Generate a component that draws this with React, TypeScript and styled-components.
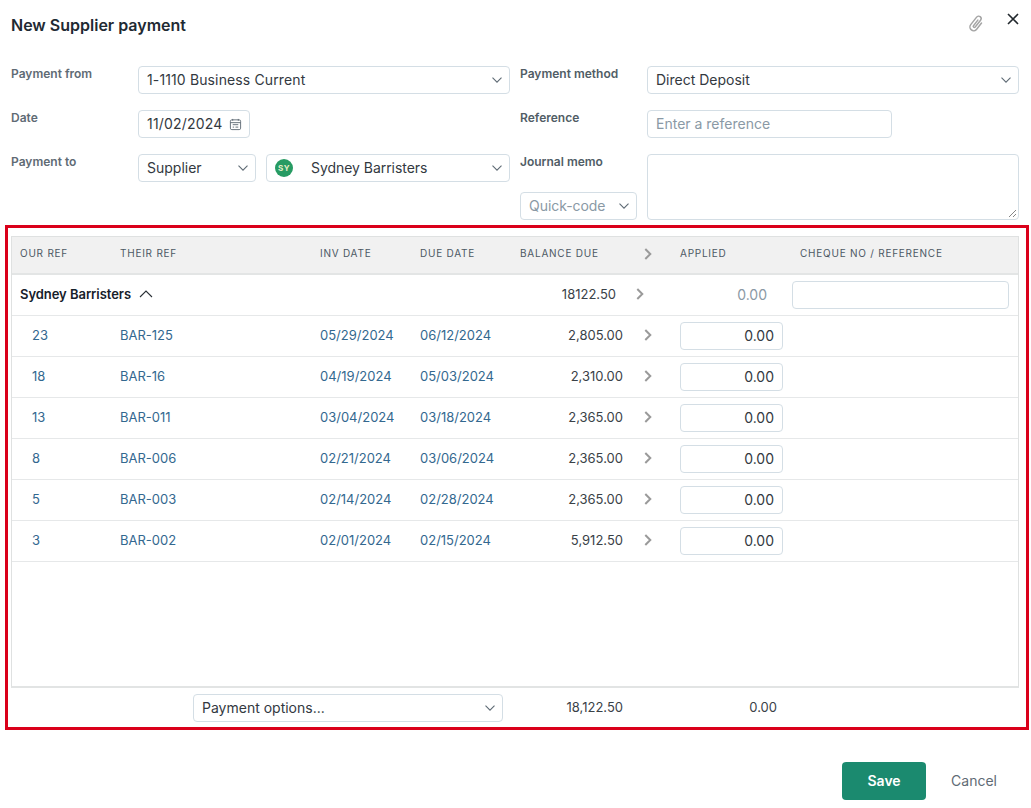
import React from "react";
import styled, { createGlobalStyle } from "styled-components";

const Global = createGlobalStyle`
  html, body { margin: 0; padding: 0; background: #fff; }
  body { font-family: Inter, "Liberation Sans", sans-serif; color: #2b3238; }
  * { box-sizing: border-box; }
`;

const Page = styled.div`
  width: 1031px;
  height: 808px;
  overflow: hidden;
  display: flex;
  flex-direction: column;
`;
const Header = styled.header`
  height: 66px;
  padding: 16px 12px 0 11px;
  display: flex;
  justify-content: space-between;
  align-items: flex-start;
`;
const Title = styled.h1`
  margin: 0;
  font-size: 16px;
  line-height: 18px;
  font-weight: 600;
  color: #1f2a33;
`;
const HeaderIcons = styled.div`
  display: flex;
  gap: 21px;
  margin-top: -3px;
  align-items: flex-start;
`;
const IconBtn = styled.span<{ $top?: number; $size: number }>`
  display: block;
  width: ${(p) => p.$size}px;
  height: ${(p) => p.$size}px;
  margin-top: ${(p) => p.$top ?? 0}px;
  svg { display: block; }
`;
const Form = styled.div`
  display: grid;
  grid-template-columns: 127px 372px 137px 372px;
  padding-left: 11px;
  grid-template-rows: 28px 28px 66px;
  row-gap: 16px;
`;
const LabelCell = styled.div<{ $second?: boolean }>`
  font-size: 12px;
  line-height: 16px;
  font-weight: 600;
  color: ${(p) => (p.$second ? "#515d66" : "#5f6b75")};
  margin-left: ${(p) => (p.$second ? 10 : 0)}px;
`;
const MemoLabelCell = styled(LabelCell)`
  display: flex;
  flex-direction: column;
  justify-content: space-between;
`;
const FieldBox = styled.div<{ $w?: number; $muted?: boolean }>`
  position: relative;
  height: 28px;
  width: ${(p) => (p.$w ? `${p.$w}px` : "100%")};
  border: 1px solid #d4dee5;
  border-radius: 4px;
  background: #fff;
  display: flex;
  align-items: center;
  padding: 0 7px 1px 8px;
  font-size: 14px;
  font-weight: 400;
  color: ${(p) => (p.$muted ? "#8a99a5" : "#33393f")};
  flex-shrink: 0;
  white-space: nowrap;
`;
const FieldText = styled.span<{ $track?: number }>`
  flex: 1;
  letter-spacing: ${(p) => p.$track ?? 0}px;
`;
const FieldInline = styled.div`
  display: flex;
  gap: 10px;
`;
const Avatar = styled.span`
  width: 18px;
  height: 18px;
  border-radius: 50%;
  background: #279b63;
  color: #e8efc9;
  font-size: 8px;
  font-weight: 700;
  letter-spacing: 0.5px;
  display: flex;
  align-items: center;
  justify-content: center;
  margin: 1px 18px 0 0;
`;
const IconSlot = styled.span`
  display: flex;
  margin: 1px 0 0;
`;
const Memo = styled.div`
  position: relative;
  height: 66px;
  border: 1px solid #d4dee5;
  border-radius: 4px;
`;
const ResizeGrip = styled.svg`
  position: absolute;
  right: 1px;
  bottom: 1px;
`;
const Highlight = styled.section`
  margin: 5px 2px 0 5px;
  height: 505px;
  border: 3px solid #da001a;
  padding: 8px 7px 0 3px;
  display: flex;
  flex-direction: column;
`;
const TableFrame = styled.div`
  height: 452px;
  flex: none;
  border: 1px solid #dfe1e1;
  border-bottom: 2px solid #e2e4e4;
`;
const Row = styled.div`
  display: grid;
  grid-template-columns: 100px 200px 100px 100px 120px 40px 120px 1fr;
  align-items: center;
`;
const HeadRow = styled(Row)`
  height: 38px;
  background: #f1f1f1;
  border-bottom: 2px solid #e3e5e5;
`;
const HeadCell = styled.div`
  font-size: 10px;
  line-height: 12px;
  letter-spacing: 0.76px;
  padding: 0 0 5px 8px;
  color: #4c5863;
  font-weight: 400;
  white-space: nowrap;
`;
const GroupRow = styled(Row)`
  height: 41px;
  border-bottom: 1px solid #e6e8e9;
`;
const DataRow = styled(Row)`
  height: 41px;
  border-bottom: 1px solid #e6e8e9;
`;
const GroupName = styled.div`
  grid-column: 1 / span 4;
  padding: 0 0 2px 8px;
  font-size: 13px;
  font-weight: 600;
  color: #16202a;
  display: flex;
  align-items: center;
  gap: 8px;
  letter-spacing: -0.05px;
`;
const Num = styled.div<{ $pad?: number; $muted?: boolean }>`
  text-align: right;
  font-size: 13px;
  padding: 0 ${(p) => p.$pad ?? 9}px 2px 0;
  color: ${(p) => (p.$muted ? "#8a99a5" : "#3a4147")};
`;
const GroupApplied = styled(Num)`
  font-size: 14px;
  padding-right: 25px;
`;
const LinkCell = styled.a<{ $indent?: number }>`
  font-size: 13px;
  color: #33688f;
  padding: 0 0 2px ${(p) => p.$indent ?? 8}px;
  text-decoration: none;
`;
const ChevronCell = styled.div<{ $shift?: number }>`
  padding: 0 0 2px ${(p) => p.$shift ?? 12}px;
  display: flex;
  align-items: center;
`;
const AppliedWrap = styled.div`
  padding-left: 8px;
`;
const AmountBox = styled.div`
  width: 103px;
  height: 28px;
  border: 1px solid #d4dee5;
  border-radius: 4px;
  font-size: 14px;
  color: #33393f;
  text-align: right;
  line-height: 25px;
  padding-right: 8px;
`;
const ChequeBox = styled.div`
  width: 217px;
  height: 28px;
  border: 1px solid #d4dee5;
  border-radius: 4px;
`;
const FooterRow = styled(Row)`
  height: 39px;
  padding-top: 1px;
  margin-left: 1px;
`;
const OptionsWrap = styled.div`
  grid-column: 1 / span 4;
  padding-left: 181px;
`;
const FooterApplied = styled(Num)`
  grid-column: 7;
  padding-right: 15px;
`;
const Actions = styled.footer`
  display: flex;
  justify-content: flex-end;
  align-items: center;
  gap: 25px;
  padding: 32px 34px 0 0;
`;
const Save = styled.button`
  width: 84px;
  height: 38px;
  padding: 0 0 2px;
  background: #1b8a6f;
  color: #fff;
  border: 0;
  border-radius: 4px;
  font: 600 14px Inter, "Liberation Sans", sans-serif;
`;
const Cancel = styled.button`
  background: none;
  border: 0;
  padding: 0 0 2px;
  color: #5f6b75;
  font: 400 14px Inter, "Liberation Sans", sans-serif;
`;

const Down = ({ color = "#5f6b75" }: { color?: string }) => (
  <IconSlot>
    <svg width="10" height="6" viewBox="0 0 10 6" fill="none">
      <path d="M.5.7 5 5.2 9.5.7" stroke={color} strokeWidth="1.1" />
    </svg>
  </IconSlot>
);
const Up = () => (
  <svg width="14" height="8" viewBox="0 0 14 8" fill="none">
    <path d="M1 7 7 1 13 7" stroke="#2a3036" strokeWidth="1.1" />
  </svg>
);
const Chevron = () => (
  <svg width="8" height="12" viewBox="0 0 8 12" fill="none">
    <path d="M1.3 1 6.3 6 1.3 11" stroke="#9a9a9a" strokeWidth="2" />
  </svg>
);
const Calendar = () => (
  <IconSlot>
    <svg width="13" height="13" viewBox="0 0 14 14" fill="none" stroke="#5f6b75" strokeWidth="1">
      <rect x="1.5" y="2" width="11" height="10.5" rx="1.5" />
      <path d="M1.5 5h11M4 1v2M10 1v2M4 7.2h6M7 9.8h3M4 9.8h1.5" />
    </svg>
  </IconSlot>
);
const Clip = () => (
  <svg width="20" height="20" viewBox="0 0 24 24" fill="none" stroke="#a5a5a5" strokeWidth="1.8" strokeLinecap="round" strokeLinejoin="round">
    <path transform="rotate(38 12 12)" d="M16.5 7v9.5a4.5 4.5 0 0 1-9 0V5a3 3 0 0 1 6 0v10.5a1.3 1.3 0 0 1-2.6 0V7" />
  </svg>
);
const Close = () => (
  <svg width="12" height="12" viewBox="0 0 12 12" fill="none">
    <path d="M1 1 11 11M11 1 1 11" stroke="#22282d" strokeWidth="1.6" />
  </svg>
);

type Line = { our: string; their: string; inv: string; due: string; bal: string };
const lines: Line[] = [
  { our: "23", their: "BAR-125", inv: "05/29/2024", due: "06/12/2024", bal: "2,805.00" },
  { our: "18", their: "BAR-16", inv: "04/19/2024", due: "05/03/2024", bal: "2,310.00" },
  { our: "13", their: "BAR-011", inv: "03/04/2024", due: "03/18/2024", bal: "2,365.00" },
  { our: "8", their: "BAR-006", inv: "02/21/2024", due: "03/06/2024", bal: "2,365.00" },
  { our: "5", their: "BAR-003", inv: "02/14/2024", due: "02/28/2024", bal: "2,365.00" },
  { our: "3", their: "BAR-002", inv: "02/01/2024", due: "02/15/2024", bal: "5,912.50" },
];

export default function App() {
  return (
    <Page>
      <Global />
      <Header>
        <Title>New Supplier payment</Title>
        <HeaderIcons>
          <IconBtn $size={20} $top={1}><Clip /></IconBtn>
          <IconBtn $size={12}><Close /></IconBtn>
        </HeaderIcons>
      </Header>
      <Form>
        <LabelCell>Payment from</LabelCell>
        <FieldBox><FieldText $track={0.13}>1-1110 Business Current</FieldText><Down /></FieldBox>
        <LabelCell $second>Payment method</LabelCell>
        <FieldBox><FieldText>Direct Deposit</FieldText><Down /></FieldBox>

        <LabelCell>Date</LabelCell>
        <FieldBox $w={112}><FieldText $track={0.2}>11/02/2024</FieldText><Calendar /></FieldBox>
        <LabelCell $second>Reference</LabelCell>
        <FieldBox $w={245} $muted><FieldText>Enter a reference</FieldText></FieldBox>

        <LabelCell>Payment to</LabelCell>
        <FieldInline>
          <FieldBox $w={118}><FieldText>Supplier</FieldText><Down /></FieldBox>
          <FieldBox $w={244}><Avatar>SY</Avatar><FieldText $track={-0.05}>Sydney Barristers</FieldText><Down /></FieldBox>
        </FieldInline>
        <MemoLabelCell $second>
          Journal memo
          <FieldBox $w={117} $muted><FieldText $track={-0.05}>Quick-code</FieldText><Down /></FieldBox>
        </MemoLabelCell>
        <Memo>
          <ResizeGrip width="10" height="10" viewBox="0 0 10 10" fill="none">
            <path d="M2 9 9 2M6 9 9 6" stroke="#666" strokeWidth="0.8" />
          </ResizeGrip>
        </Memo>
      </Form>

      <Highlight>
        <TableFrame>
          <HeadRow>
            <HeadCell>OUR REF</HeadCell>
            <HeadCell>THEIR REF</HeadCell>
            <HeadCell>INV DATE</HeadCell>
            <HeadCell>DUE DATE</HeadCell>
            <HeadCell>BALANCE DUE</HeadCell>
            <ChevronCell><Chevron /></ChevronCell>
            <HeadCell>APPLIED</HeadCell>
            <HeadCell>CHEQUE NO / REFERENCE</HeadCell>
          </HeadRow>
          <GroupRow>
            <GroupName>Sydney Barristers <Up /></GroupName>
            <Num $pad={16}>18122.50</Num>
            <ChevronCell $shift={4}><Chevron /></ChevronCell>
            <GroupApplied $muted>0.00</GroupApplied>
            <ChequeBox />
          </GroupRow>
          {lines.map((l) => (
            <DataRow key={l.our}>
              <LinkCell $indent={20}>{l.our}</LinkCell>
              <LinkCell>{l.their}</LinkCell>
              <LinkCell>{l.inv}</LinkCell>
              <LinkCell>{l.due}</LinkCell>
              <Num>{l.bal}</Num>
              <ChevronCell><Chevron /></ChevronCell>
              <AppliedWrap><AmountBox>0.00</AmountBox></AppliedWrap>
              <div />
            </DataRow>
          ))}
        </TableFrame>
        <FooterRow>
          <OptionsWrap>
            <FieldBox $w={310}><FieldText>Payment options...</FieldText><Down /></FieldBox>
          </OptionsWrap>
          <Num>18,122.50</Num>
          <FooterApplied>0.00</FooterApplied>
        </FooterRow>
      </Highlight>
      <Actions>
        <Save>Save</Save>
        <Cancel>Cancel</Cancel>
      </Actions>
    </Page>
  );
}
